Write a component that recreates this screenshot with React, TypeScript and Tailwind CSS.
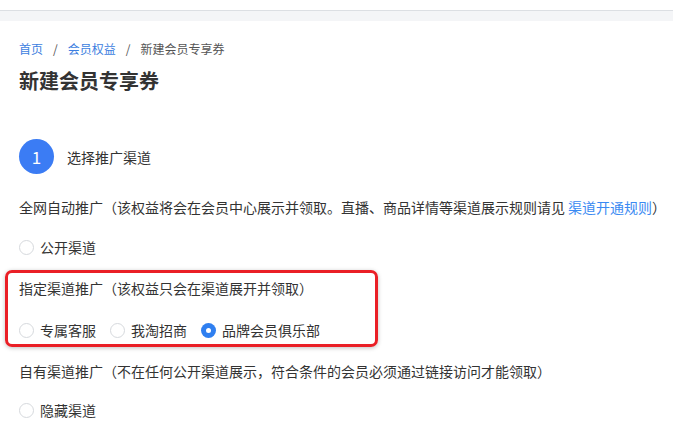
import React from "react";

const FONT = { fontFamily: '"Noto Sans CJK SC", "Noto Sans", sans-serif' };

function Radio({ label, checked = false }: { label: string; checked?: boolean }) {
  return (
    <label className="flex items-center gap-[6px]">
      {checked ? (
        <span className="flex h-[15px] w-[15px] items-center justify-center rounded-full bg-[#2f7ff0]">
          <span className="h-[5px] w-[5px] rounded-full bg-white" />
        </span>
      ) : (
        <span className="h-[15px] w-[15px] rounded-full border border-[#d6d9dd] bg-white" />
      )}
      <span>{label}</span>
    </label>
  );
}

export default function App() {
  return (
    <div className="h-[448px] w-full overflow-hidden bg-white text-[14px] leading-[22px] text-[#333]" style={FONT}>
      <div className="h-[10px] bg-white" />
      <div className="h-px bg-[#dcdfe3]" />
      <div className="h-[10px] bg-[#f4f5f7]" />

      <div className="pl-[19px]">
        {/* breadcrumb */}
        <div className="mt-[19px] flex items-center text-[12px] leading-[18px]">
          <span className="text-[#3c7ee0]">首页</span>
          <span className="mx-[10px] text-[#555]">/</span>
          <span className="text-[#3c7ee0]">会员权益</span>
          <span className="mx-[10px] text-[#555]">/</span>
          <span className="text-[#555]">新建会员专享券</span>
        </div>

        <h1 className="mt-[9px] text-[20px] font-bold leading-[28px] text-[#333]">新建会员专享券</h1>

        {/* step */}
        <div className="mt-[44px] flex items-center gap-[13px]">
          <div className="flex h-[35px] w-[35px] items-center justify-center rounded-full bg-[#3b7cf4] text-[17px] text-white">
            1
          </div>
          <span>选择推广渠道</span>
        </div>

        <p className="mt-[22px] whitespace-nowrap">
          全网自动推广（该权益将会在会员中心展示并领取。直播、商品详情等渠道展示规则请见
          <span className="ml-[3px] text-[#3a8af2]">渠道开通规则</span>）
        </p>

        <div className="mt-[18px]">
          <Radio label="公开渠道" />
        </div>

        {/* highlighted section */}
        <div className="-ml-[14px] mt-[12px] w-[373px] rounded-[7px] border-[3px] border-[#ea1f26] pb-[3px] pl-[11px] pt-[4px] shadow-[0_1px_4px_rgba(0,0,0,0.25)]">
          <p>指定渠道推广（该权益只会在渠道展开并领取）</p>
          <div className="mt-[20px] flex items-center gap-[14px]">
            <Radio label="专属客服" />
            <Radio label="我淘招商" />
            <Radio label="品牌会员俱乐部" checked />
          </div>
        </div>

        <p className="mt-[13px]">自有渠道推广（不在任何公开渠道展示，符合条件的会员必须通过链接访问才能领取）</p>

        <div className="mt-[17px]">
          <Radio label="隐藏渠道" />
        </div>
      </div>
    </div>
  );
}
